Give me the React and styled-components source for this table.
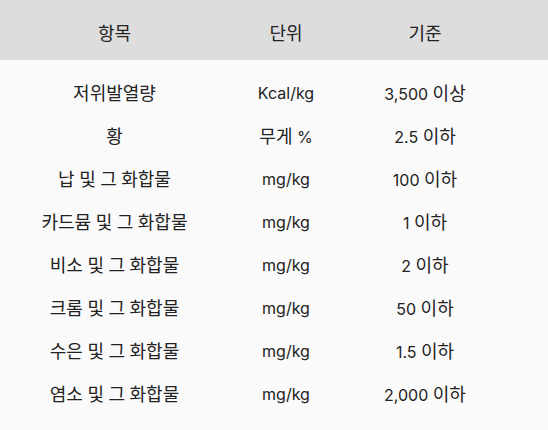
import React from 'react';
import styled, { createGlobalStyle } from 'styled-components';

const GlobalStyle = createGlobalStyle`
  html, body {
    margin: 0;
    padding: 0;
    background: #fafafa;
  }
  body {
    font-family: Inter, "Noto Sans CJK KR", sans-serif;
    color: #222;
  }
`;

const Table = styled.div`
  width: 548px;
  min-height: 430px;
  background: #fafafa;
`;

const Row = styled.div`
  display: grid;
  grid-template-columns: 229px 114px 164px 1fr;
  align-items: center;
  height: ${p => (p.$head ? '60px' : '43px')};
  padding-top: ${p => (p.$head ? '6px' : '0')};
  box-sizing: border-box;
  background: ${p => (p.$head ? '#dddddd' : 'transparent')};
`;

const Body = styled.div`
  padding-top: 11px;
`;

const Cell = styled.div`
  text-align: center;
  font-size: 16px;
  line-height: 20px;
  white-space: nowrap;
`;

// hangul is drawn a touch larger than the latin text
const Ko = styled.span`
  font-family: "Noto Sans CJK KR", sans-serif;
  font-size: 18px;
  line-height: 20px;
`;

const mixed = text =>
  text.split(/([가-힣]+)/).map((part, i) =>
    /[가-힣]/.test(part) ? <Ko key={i}>{part}</Ko> : part,
  );

const rows = [
  ['저위발열량', 'Kcal/kg', '3,500 이상'],
  ['황', '무게 %', '2.5 이하'],
  ['납 및 그 화합물', 'mg/kg', '100 이하'],
  ['카드뮴 및 그 화합물', 'mg/kg', '1 이하'],
  ['비소 및 그 화합물', 'mg/kg', '2 이하'],
  ['크롬 및 그 화합물', 'mg/kg', '50 이하'],
  ['수은 및 그 화합물', 'mg/kg', '1.5 이하'],
  ['염소 및 그 화합물', 'mg/kg', '2,000 이하'],
];

export default function App() {
  return (
    <>
      <GlobalStyle />
      <Table>
        <Row $head>
          <Cell>{mixed('항목')}</Cell>
          <Cell>{mixed('단위')}</Cell>
          <Cell>{mixed('기준')}</Cell>
        </Row>
        <Body>
          {rows.map(([item, unit, limit]) => (
            <Row key={item}>
              <Cell>{mixed(item)}</Cell>
              <Cell>{mixed(unit)}</Cell>
              <Cell>{mixed(limit)}</Cell>
            </Row>
          ))}
        </Body>
      </Table>
    </>
  );
}
